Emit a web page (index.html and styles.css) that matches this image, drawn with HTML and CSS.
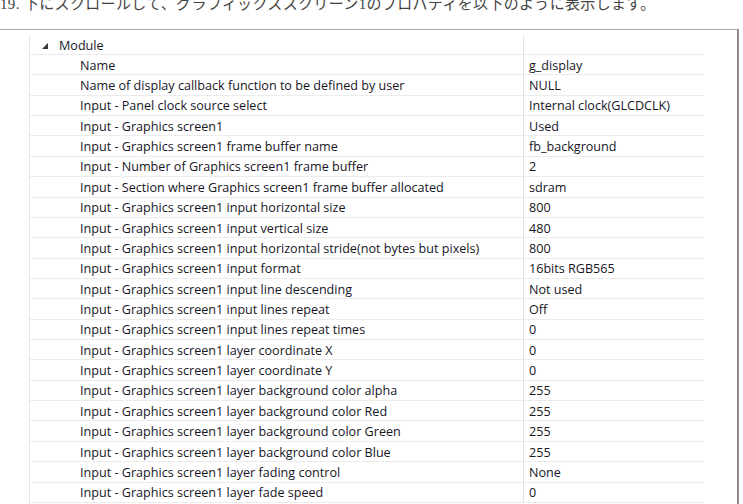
FILE: index.html
```html
<!DOCTYPE html>
<html lang="ja">
<head>
  <meta charset="UTF-8" />
  <title>Graphics screen1 properties</title>
  <link rel="stylesheet" href="styles.css">
</head>
<body>
  <p class="step">19. 下にスクロールして、グラフィックススクリーン1のプロパティを以下のように表示します。</p>

  <div class="frame">
    <div class="sheet">
      <div class="gutter"></div>
      <div class="props">
        <div class="row group">
          <div class="name"><svg class="twisty" width="6" height="6" viewBox="0 0 6 6"><polygon points="0,6 6,6 6,0" /></svg>Module</div>
          <div class="value"></div>
        </div>
        <div class="row"><div class="name">Name</div><div class="value">g_display</div></div>
        <div class="row"><div class="name">Name of display callback function to be defined by user</div><div class="value">NULL</div></div>
        <div class="row"><div class="name">Input - Panel clock source select</div><div class="value">Internal clock(GLCDCLK)</div></div>
        <div class="row"><div class="name">Input - Graphics screen1</div><div class="value">Used</div></div>
        <div class="row"><div class="name">Input - Graphics screen1 frame buffer name</div><div class="value">fb_background</div></div>
        <div class="row"><div class="name">Input - Number of Graphics screen1 frame buffer</div><div class="value">2</div></div>
        <div class="row"><div class="name">Input - Section where Graphics screen1 frame buffer allocated</div><div class="value">sdram</div></div>
        <div class="row"><div class="name">Input - Graphics screen1 input horizontal size</div><div class="value">800</div></div>
        <div class="row"><div class="name">Input - Graphics screen1 input vertical size</div><div class="value">480</div></div>
        <div class="row"><div class="name">Input - Graphics screen1 input horizontal stride(not bytes but pixels)</div><div class="value">800</div></div>
        <div class="row"><div class="name">Input - Graphics screen1 input format</div><div class="value">16bits RGB565</div></div>
        <div class="row"><div class="name">Input - Graphics screen1 input line descending</div><div class="value">Not used</div></div>
        <div class="row"><div class="name">Input - Graphics screen1 input lines repeat</div><div class="value">Off</div></div>
        <div class="row"><div class="name">Input - Graphics screen1 input lines repeat times</div><div class="value">0</div></div>
        <div class="row"><div class="name">Input - Graphics screen1 layer coordinate X</div><div class="value">0</div></div>
        <div class="row"><div class="name">Input - Graphics screen1 layer coordinate Y</div><div class="value">0</div></div>
        <div class="row"><div class="name">Input - Graphics screen1 layer background color alpha</div><div class="value">255</div></div>
        <div class="row"><div class="name">Input - Graphics screen1 layer background color Red</div><div class="value">255</div></div>
        <div class="row"><div class="name">Input - Graphics screen1 layer background color Green</div><div class="value">255</div></div>
        <div class="row"><div class="name">Input - Graphics screen1 layer background color Blue</div><div class="value">255</div></div>
        <div class="row"><div class="name">Input - Graphics screen1 layer fading control</div><div class="value">None</div></div>
        <div class="row"><div class="name">Input - Graphics screen1 layer fade speed</div><div class="value">0</div></div>
      </div>
    </div>
  </div>
</body>
</html>
```

FILE: styles.css
```css
html, body {
  margin: 0;
  background: #fff;
  overflow: hidden;
}

.step {
  margin: -3px 0 0 0;
  height: 32px;
  font-family: "Liberation Serif", "Noto Sans CJK JP", serif;
  font-size: 15px;
  line-height: 15px;
  color: #444;
  letter-spacing: 0.34px;
}

/* property panel */
.frame {
  width: 737px;
  height: 480px;
  border-top: 1px solid #a8a8a8;
  border-right: 2px solid #8c8c8c;
  padding-top: 6px;
  font-family: "Open Sans", "Noto Sans", sans-serif;
  font-size: 12.6px;
  color: #16161f;
}

.sheet {
  display: flex;
  height: 100%;
}

.gutter {
  width: 29px;
  flex: none;
}

.props {
  width: 674px;
  border-left: 1px solid #e2e2e2;
}

.row {
  display: grid;
  grid-template-columns: 493px 181px;
  height: 20.36px;
  box-sizing: border-box;
  border-bottom: 1px solid #ececec;
}

.row.group {
  height: 19px;
}

.name, .value {
  display: flex;
  align-items: center;
  padding-top: 1px;
  white-space: nowrap;
  overflow: hidden;
}

.name {
  padding-left: 50px;
}

.value {
  padding-left: 5px;
  border-left: 1px solid #e2e2e2;
}

.group .name {
  padding-left: 12px;
}

.twisty {
  margin-right: 11px;
  fill: #3a3a3a;
}
```
